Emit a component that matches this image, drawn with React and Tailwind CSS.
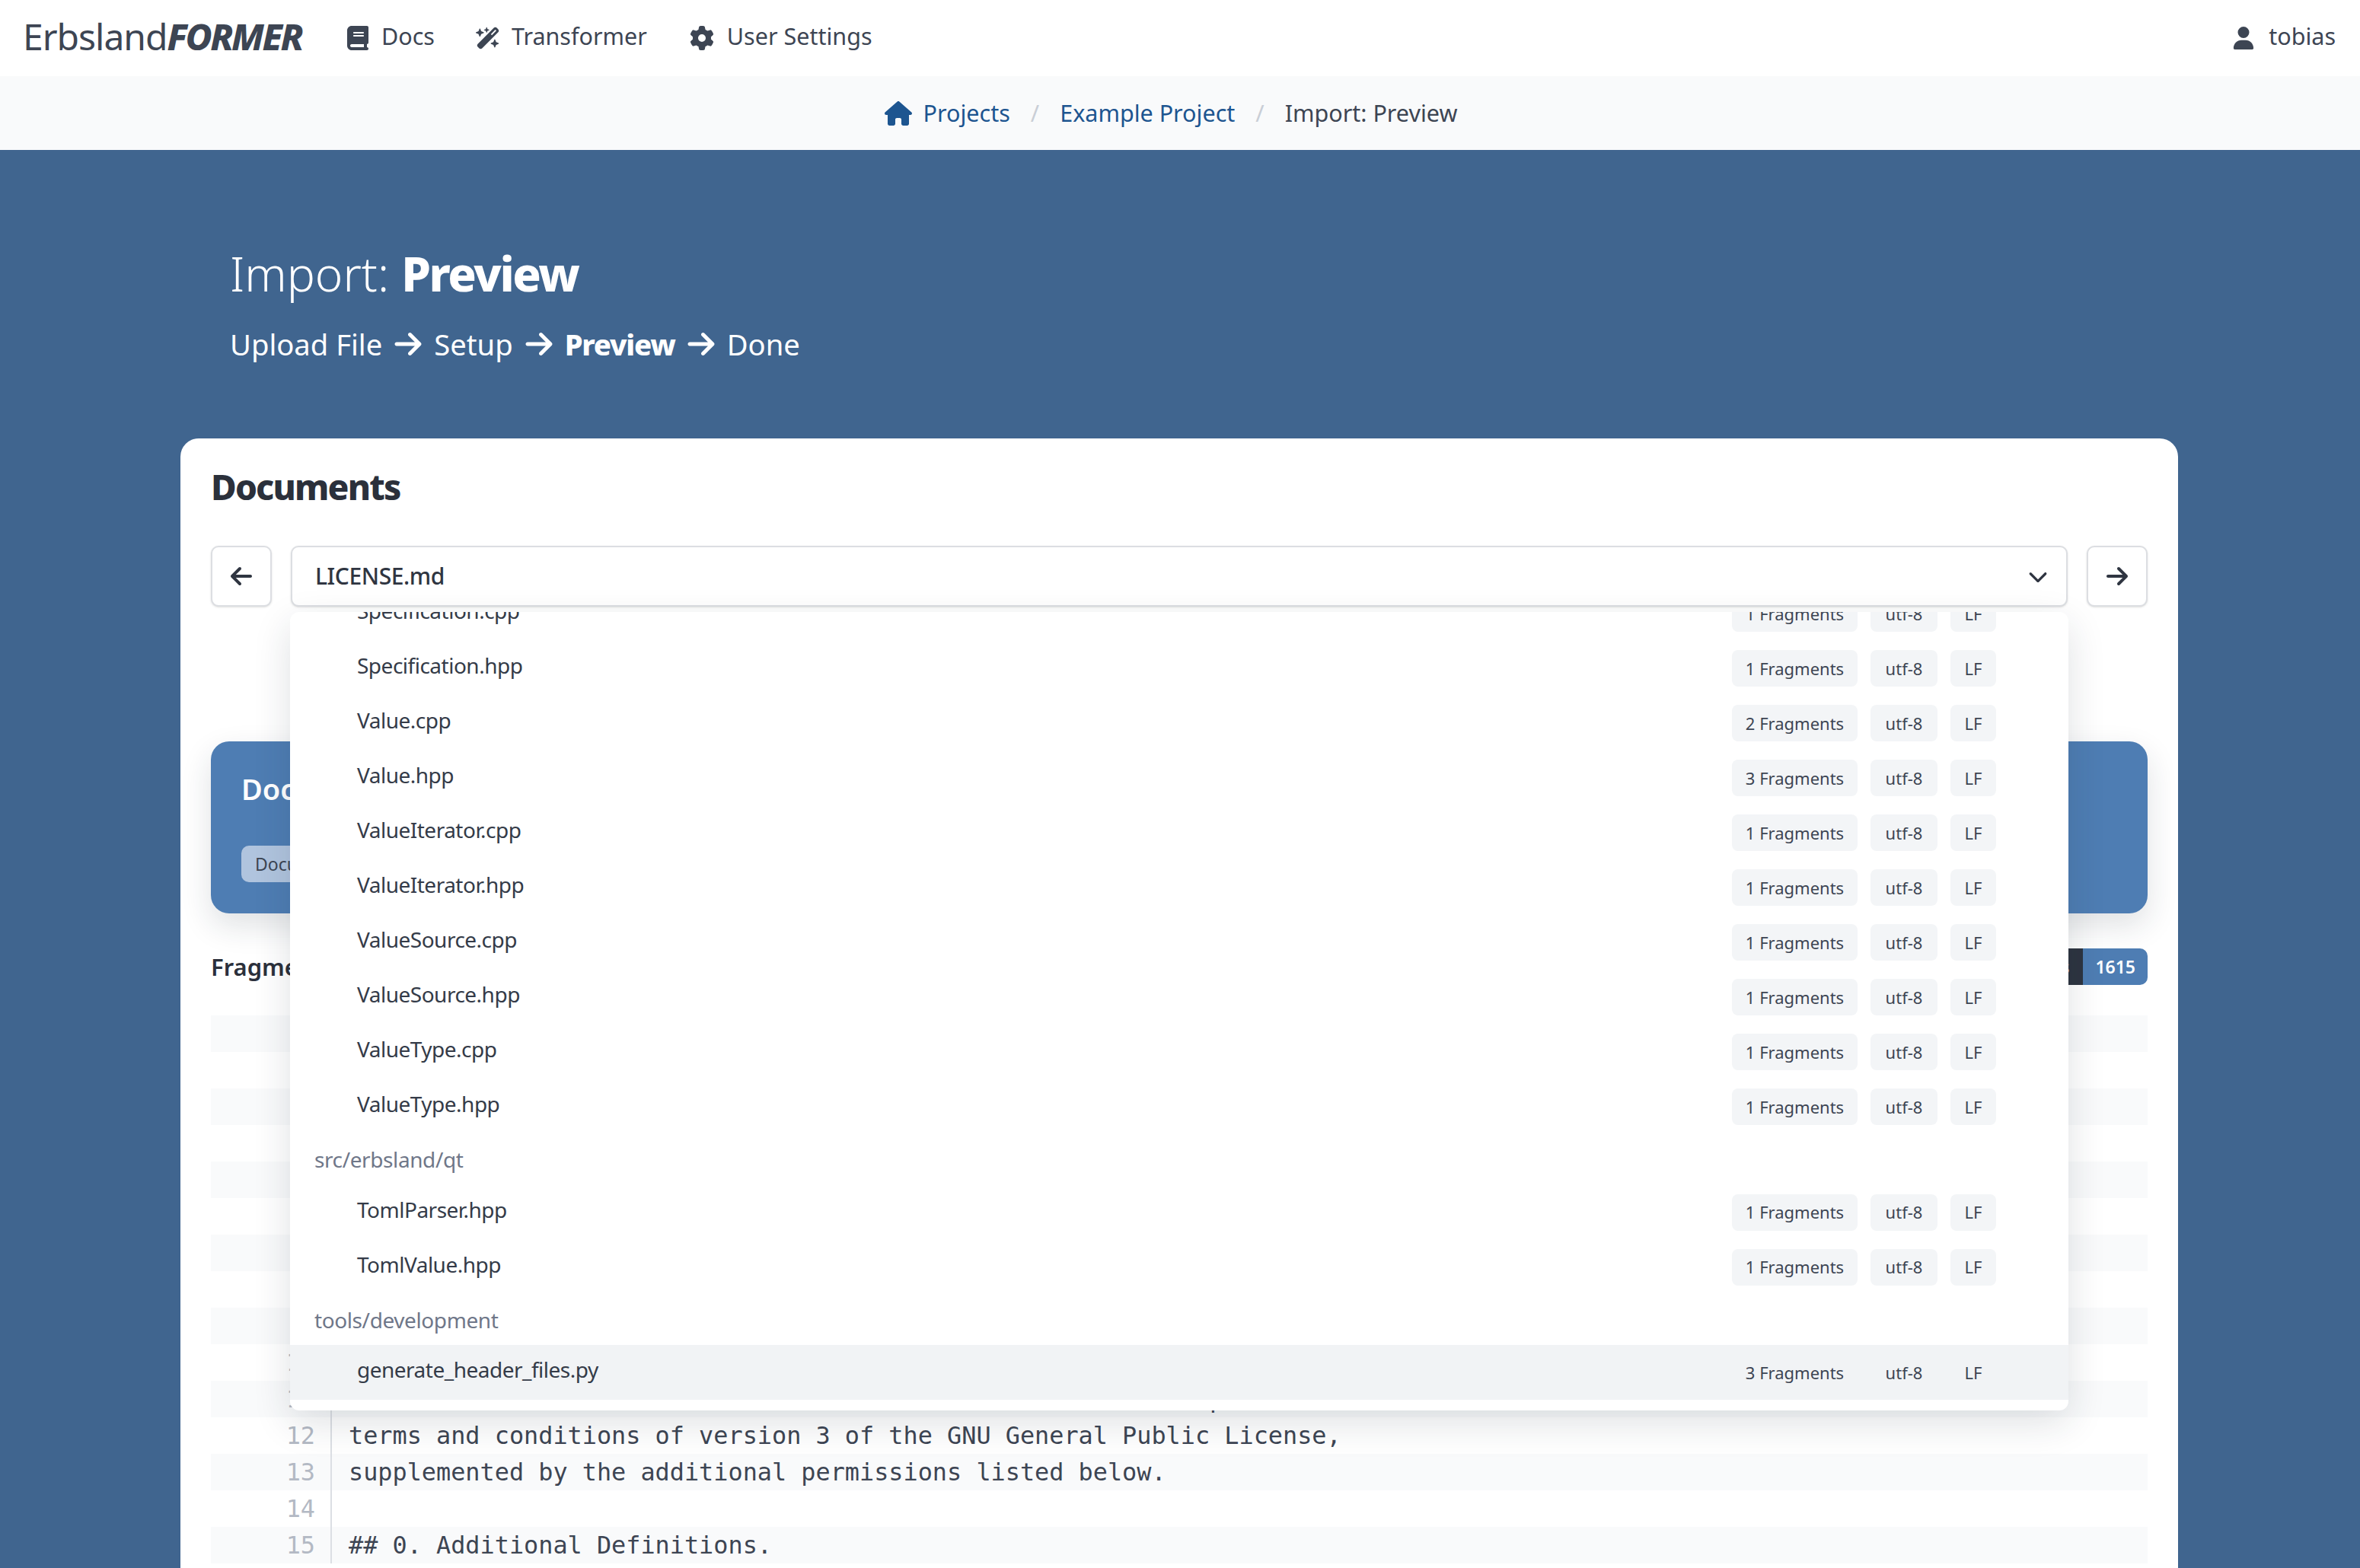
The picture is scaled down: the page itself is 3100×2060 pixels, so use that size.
import { FaBook, FaWandMagicSparkles, FaGear, FaUser, FaHouse, FaArrowRight, FaArrowLeft, FaChevronDown } from "react-icons/fa6";

const files1 = [
  ["Specification.cpp", 1],
  ["Specification.hpp", 1],
  ["Value.cpp", 2],
  ["Value.hpp", 3],
  ["ValueIterator.cpp", 1],
  ["ValueIterator.hpp", 1],
  ["ValueSource.cpp", 1],
  ["ValueSource.hpp", 1],
  ["ValueType.cpp", 1],
  ["ValueType.hpp", 1],
];

const files2 = [
  ["TomlParser.hpp", 1],
  ["TomlValue.hpp", 1],
];

const codeLines = [
  "# GNU LESSER GENERAL PUBLIC LICENSE",
  "",
  "Version 3, 29 June 2007",
  "",
  "Copyright (C) 2007 Free Software Foundation, Inc. <https://fsf.org/>",
  "",
  "Everyone is permitted to copy and",
  "distribute verbatim copies",
  "of this license document, but changing it is not allowed.",
  "",
  "This version of the GNU Lesser General Public License incorporates the",
  "terms and conditions of version 3 of the GNU General Public License,",
  "supplemented by the additional permissions listed below.",
  "",
  "## 0. Additional Definitions.",
];

const Row = ({ name, count, active }) => (
  <div className={`flex h-[72px] items-center pl-[88px] pr-[95px] ${active ? "bg-[#f1f3f5]" : ""}`}>
    <span className="flex-1 -translate-y-[4px] text-[28px] tracking-[-0.5px] text-[#343b48]">{name}</span>
    <div className="flex gap-[17px] text-[22px] text-[#3d4553]">
      <span className={`flex h-[48px] w-[165px] items-center justify-center rounded-[8px] ${active ? "" : "bg-[#f3f5f7]"}`}>{count} Fragments</span>
      <span className={`flex h-[48px] w-[88px] items-center justify-center rounded-[8px] ${active ? "" : "bg-[#f3f5f7]"}`}>utf-8</span>
      <span className={`flex h-[48px] w-[60px] items-center justify-center rounded-[8px] ${active ? "" : "bg-[#f3f5f7]"}`}>LF</span>
    </div>
  </div>
);

const Group = ({ title }) => (
  <div className="flex h-[66.5px] items-center pl-[32px] text-[28px] tracking-[-0.4px] text-[#6f7789]">{title}</div>
);

const App = () => {
  return (
    <div className="h-[2060px] overflow-hidden bg-[#40658f] font-['Noto_Sans',sans-serif] text-[#3d4553]">
      <nav className="flex h-[100px] items-center bg-white pl-[30px] pr-[32px] text-[30.5px]">
        <div className="w-[424px] -translate-y-[2px] text-[48px] tracking-[-1px] whitespace-nowrap">
          Erbsland<b className="font-extrabold tracking-[-2.5px] italic">FORMER</b>
        </div>
        <a className="flex items-center gap-[15px]"><FaBook className="text-[32px]" /> <span className="-translate-y-[2px]">Docs</span></a>
        <a className="ml-[54px] flex items-center gap-[15px]"><FaWandMagicSparkles className="text-[32px]" /> <span className="-translate-y-[2px]">Transformer</span></a>
        <a className="ml-[56px] flex items-center gap-[17px]"><FaGear className="text-[32px]" /> <span className="-translate-y-[2px]">User Settings</span></a>
        <a className="ml-auto flex items-center gap-[18px]"><FaUser className="text-[30px]" /> <span className="-translate-y-[2px]">tobias</span></a>
      </nav>

      <div className="flex h-[97px] items-center justify-center bg-[#f9fafb] pr-[24px] text-[30.5px]">
        <a className="flex items-center gap-[15px] text-[#1d5590]"><FaHouse className="text-[36px]" /> Projects</a>
        <span className="mx-[27px] text-[#c9ced6]">/</span>
        <a className="text-[#1d5590]">Example Project</a>
        <span className="mx-[27px] text-[#c9ced6]">/</span>
        <span>Import: Preview</span>
      </div>

      <header className="pt-[117px] pl-[302px] text-white">
        <h1 className="text-[62px] leading-[90px] font-light">Import: <b className="font-extrabold tracking-[-2.4px]">Preview</b></h1>
        <div className="mt-[20px] flex items-center gap-[14px] text-[38.2px] leading-[56px]">
          <span>Upload File</span><FaArrowRight className="text-[40px]" />
          <span>Setup</span><FaArrowRight className="text-[40px]" />
          <b className="font-extrabold tracking-[-1.2px]">Preview</b><FaArrowRight className="text-[40px]" />
          <span>Done</span>
        </div>
      </header>

      <main className="relative mt-[96px] ml-[237px] h-[1500px] w-[2624px] rounded-t-[24px] bg-white px-[40px] pt-[38px]">
        <h2 className="text-[46px] leading-[50px] font-extrabold tracking-[-1.8px] text-[#2b303b]">Documents</h2>

        <div className="relative mt-[53px] flex h-[80px] gap-[25px]">
          <button className="flex w-[80px] items-center justify-center rounded-[10px] border-2 border-[#dcdee2] bg-white shadow-sm">
            <FaArrowLeft className="text-[32px] text-[#2f3541]" />
          </button>
          <div className="flex flex-1 items-center justify-between rounded-[10px] border-2 border-[#dcdee2] bg-white pr-[24px] pl-[30px] text-[30px] font-medium tracking-[-0.4px] text-[#2f3541] shadow-sm">
            <span className="-translate-y-[1px]">LICENSE.md</span>
            <FaChevronDown className="text-[26px]" />
          </div>
          <button className="flex w-[80px] items-center justify-center rounded-[10px] border-2 border-[#dcdee2] bg-white shadow-sm">
            <FaArrowRight className="text-[32px] text-[#2f3541]" />
          </button>

          <div className="absolute top-[87px] left-[104px] z-10 h-[1049px] w-[2336px] overflow-hidden rounded-[12px] bg-white shadow-[0_16px_50px_rgba(30,40,60,0.14)]">
            <div className="-mt-[34px]">
              {files1.map(([name, count]) => <Row key={name} name={name} count={count} />)}
              <Group title="src/erbsland/qt" />
              {files2.map(([name, count]) => <Row key={name} name={name} count={count} />)}
              <Group title="tools/development" />
              <Row name="generate_header_files.py" count={3} active />
            </div>
          </div>
        </div>

        <section className="mt-[177px] h-[226px] rounded-[24px] bg-[#4e7db3] px-[40px] pt-[38px] shadow-[0_16px_40px_rgba(30,40,60,0.14)]">
          <div className="text-[38px] leading-[48px] font-semibold text-white">Document</div>
          <span className="mt-[51px] inline-flex h-[48px] items-center rounded-[10px] bg-[#b0c4de] px-[18px] text-[23px]">Document</span>
        </section>

        <div className="mt-[46px] flex h-[48px] items-center justify-between">
          <b className="text-[31px] font-semibold text-[#2b303b]">Fragments</b>
          <div className="flex h-full text-[23px] font-semibold text-white">
            <span className="flex items-center rounded-l-[10px] bg-[#2d3440] px-[18px]">Lines</span>
            <span className="flex items-center rounded-r-[10px] bg-[#4e7db3] px-[16px]">1615</span>
          </div>
        </div>

        <div className="mt-[40px] font-['DejaVu_Sans_Mono',monospace] text-[31.85px] leading-[48px]">
          {codeLines.map((line, i) => (
            <div key={i} className={`flex h-[48px] ${i % 2 === 0 ? "bg-[#f9fafb]" : ""}`}>
              <span className="w-[159px] shrink-0 border-r-2 border-[#dcdfe4] pr-[20px] text-right text-[#b3b9c4]">{i + 1}</span>
              <span className="pl-[22px] whitespace-pre">{line}</span>
            </div>
          ))}
        </div>
      </main>
    </div>
  );
};

export default App;
